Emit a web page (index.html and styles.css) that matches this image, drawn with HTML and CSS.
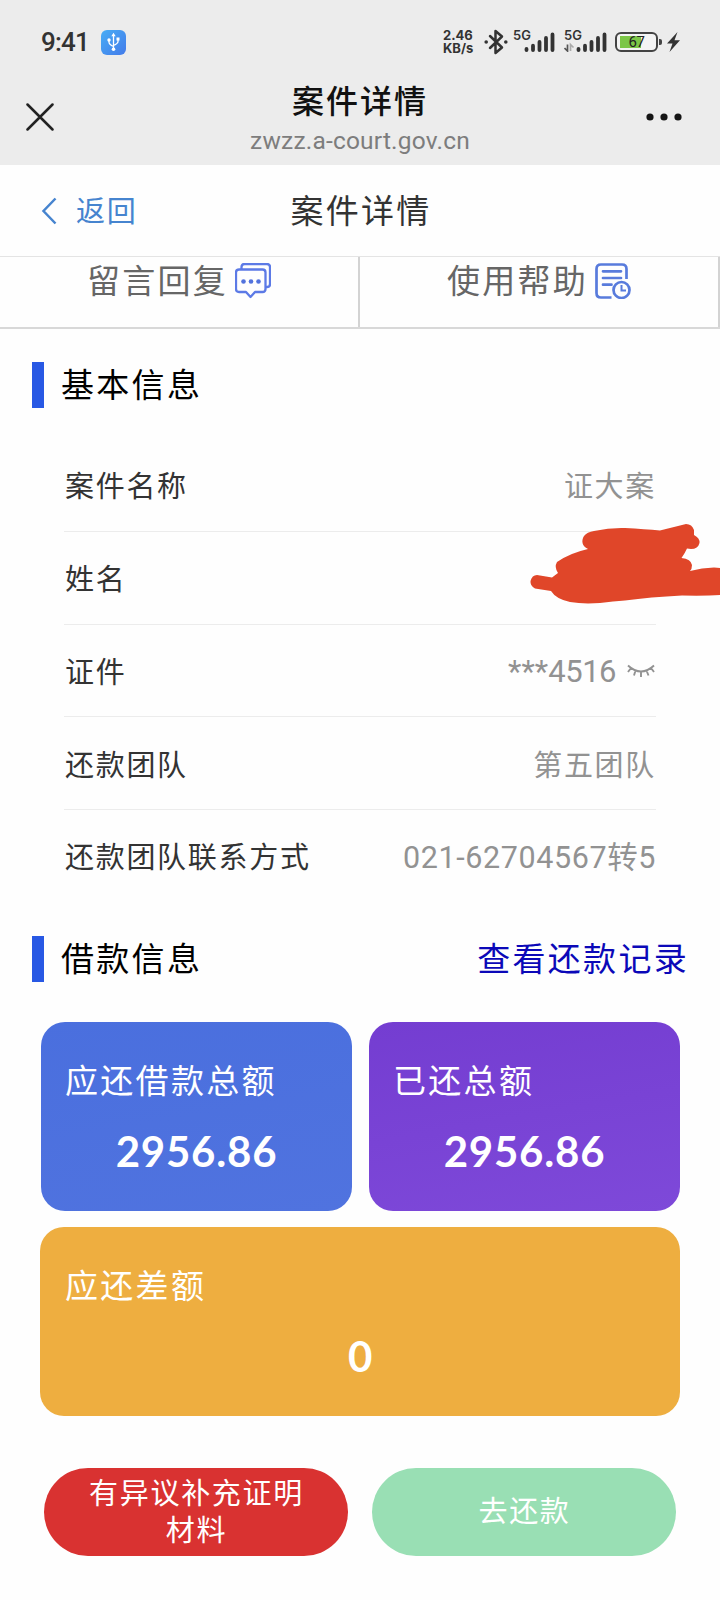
FILE: index.html
```html
<!DOCTYPE html>
<html lang="zh-CN">
<head>
<meta charset="utf-8">
<title>案件详情</title>
<link rel="stylesheet" href="styles.css">
</head>
<body>
<header class="app-bar">
  <div class="status">
    <span class="clock">9:41</span>
    <svg class="usb" width="25" height="25" viewBox="0 0 25 25">
      <defs><linearGradient id="usb" x1="0" y1="0" x2="1" y2="1"><stop offset="0" stop-color="#49adf5"/><stop offset="1" stop-color="#437bea"/></linearGradient></defs>
      <rect width="25" height="25" rx="6" fill="url(#usb)"/>
      <path d="M12.500 5v14M8 10.500v1.700q0 2 4.500 4.300M17 9.500v2q0 2-4.500 4" fill="none" stroke="#fff" stroke-width="1.300"/>
      <path d="M12.500 2.800l2.200 3.500h-4.400zM15.500 7.500h3v3h-3z" fill="#fff"/>
      <circle cx="8" cy="10" r="1.700" fill="#fff"/><circle cx="12.500" cy="19.300" r="1.800" fill="#fff"/>
    </svg>
    <div class="rate"><span>2.46</span><span>KB/s</span></div>
    <svg class="bluetooth" width="24" height="26" viewBox="0 0 24 26">
      <path d="M6 7l12 11.500-6.500 5.500v-22l6.500 5.500L6 19" fill="none" stroke="#333" stroke-width="2.500" stroke-linejoin="round" stroke-linecap="round"/>
      <circle cx="2.200" cy="13" r="1.800" fill="#333"/><circle cx="21.800" cy="13" r="1.800" fill="#333"/>
    </svg>
    <div class="signal signal-a"><span class="net">5G</span>
      <svg width="31" height="20" viewBox="0 0 31 20"><path d="M2.500 17v1M9 13.700v4.300M15.500 10v8M22 6v12M28.500 2.500v15.500" fill="none" stroke="#333" stroke-width="3.800" stroke-linecap="round"/></svg>
    </div>
    <div class="signal signal-b"><span class="net">5G</span>
      <svg width="43" height="20" viewBox="0 0 43 20"><path d="M14.500 17v1M21 13.700v4.300M27.500 10v8M34 6v12M40.500 2.500v15.500" fill="none" stroke="#333" stroke-width="3.800" stroke-linecap="round"/><path d="M3.500 12.500v6.500l-3-3" fill="none" stroke="#555" stroke-width="1.700"/><path d="M6.500 19v-6.500l3 3" fill="none" stroke="#aaa" stroke-width="1.700"/></svg>
    </div>
    <div class="battery"><span class="level">67</span></div>
    <svg class="bolt" width="14" height="20" viewBox="0 0 14 20"><path d="M10.500 0L0 11.500h5.500L2.500 20 13 8.300H7.500z" fill="#333"/></svg>
  </div>
  <div class="title-row">
    <svg class="close" width="28" height="28" viewBox="0 0 28 28"><path d="M1.500 1.500l25 25M26.500 1.500l-25 25" stroke="#222" stroke-width="2.500" stroke-linecap="round"/></svg>
    <div class="titles">
      <div class="page-title">案件详情</div>
      <div class="url">zwzz.a-court.gov.cn</div>
    </div>
    <svg class="more" width="36" height="8" viewBox="0 0 36 8"><g fill="#151515"><circle cx="4" cy="4" r="3.600"/><circle cx="18" cy="4" r="3.600"/><circle cx="32" cy="4" r="3.600"/></g></svg>
  </div>
</header>

<nav class="nav">
  <a class="back"><svg width="16" height="28" viewBox="0 0 16 28"><path d="M14.500 1.500L2.500 14l12 12.500" fill="none" stroke="#4684cf" stroke-width="2.500"/></svg><span>返回</span></a>
  <h1 class="nav-title">案件详情</h1>
</nav>

<div class="tabs">
  <div class="tab"><span>留言回复</span>
    <svg width="36" height="36" viewBox="0 0 36 36" fill="none" stroke="#5c7ae6" stroke-width="2.300" stroke-linejoin="round">
      <path d="M6.500 6V4q0-3 3-3H32q3 0 3 3v17q0 3-3 3h-1.500"/>
      <path d="M4 6.500h23.500q3 0 3 3V26q0 3-3 3H20l-4.500 5-4.500-5H4q-3 0-3-3V9.500q0-3 3-3z"/>
      <g fill="#5272dd" stroke="none"><circle cx="8.500" cy="18.500" r="2.300"/><circle cx="16" cy="18.500" r="2.300"/><circle cx="23.500" cy="18.500" r="2.300"/></g>
    </svg>
  </div>
  <div class="tab"><span>使用帮助</span>
    <svg width="36" height="36" viewBox="0 0 36 36" fill="none" stroke="#587bdc" stroke-width="2.700">
      <path d="M31.500 16V6q0-4.500-4.500-4.500H6Q1.500 1.500 1.500 6v24q0 4.500 4.500 4.500h10.500"/>
      <path d="M8 8.300h18M8 15h18M8 21.700h8.500" stroke-linecap="round"/>
      <circle cx="26.500" cy="27" r="8"/><path d="M26.500 22v5.500h4.500" stroke-width="2"/>
    </svg>
  </div>
</div>

<main class="content">
  <section class="basic">
    <div class="section-head"><h2>基本信息</h2></div>
    <dl class="rows">
      <div class="row"><dt>案件名称</dt><dd>证大案</dd></div>
      <div class="row"><dt>姓名</dt><dd></dd>
        <svg class="scribble" width="192" height="90" viewBox="528 520 192 90">
          <path fill="#e04629" d="M588 548C582 545 581 540 584 535Q587 531 594 530Q610 526.500 625 527Q645 528 660 529.500Q674 526 686 523Q692 523 694 529V534Q700 537 699.500 542Q698 548 691 548L687 547.500Q685 552 681.500 557Q691 558 692 564Q692 568 690 570Q702 566.500 714 566.500L720 567V594Q705 595 682 594.500Q650 596 625 599.500L613 600.500Q588 604 570 601Q556 598 551 590L535 587.500Q530 585 530.500 580Q532 574 537 574L552 576.500L558 572Q554 566 557 561Q570 552 588 548Z"/>
        </svg>
      </div>
      <div class="row"><dt>证件</dt><dd><span class="mask">***</span>4516<svg class="eye" width="28" height="14" viewBox="0 0 28 14"><path d="M1 1.500q13 12 26 0M4 4L1 8M8.500 6.500L7 11.500M14 7.500V13M19.500 6.500l2 5M24 4l3 4" fill="none" stroke="#929292" stroke-width="1.900"/></svg></dd></div>
      <div class="row"><dt>还款团队</dt><dd>第五团队</dd></div>
      <div class="row"><dt>还款团队联系方式</dt><dd class="phone">021-62704567转5</dd></div>
    </dl>
  </section>

  <section class="loan">
    <div class="section-head"><h2>借款信息</h2><a class="records">查看还款记录</a></div>
    <div class="cards">
      <div class="card due"><span class="label">应还借款总额</span><strong>2956.86</strong></div>
      <div class="card paid"><span class="label">已还总额</span><strong>2956.86</strong></div>
      <div class="card gap"><span class="label">应还差额</span><strong>0</strong></div>
    </div>
  </section>

  <div class="actions">
    <button class="btn dispute">有异议补充证明材料</button>
    <button class="btn repay">去还款</button>
  </div>
</main>
</body>
</html>
```

FILE: styles.css
```css
* { box-sizing: border-box; }
body {
  margin: 0;
  width: 720px;
  height: 1600px;
  overflow: hidden;
  background: #fefefe;
  color: #333;
  font-family: Roboto, "Noto Sans CJK SC", sans-serif;
}
svg { display: block; flex: none; }
h1, h2, dl, dt, dd { margin: 0; font-weight: 400; }

.app-bar { height: 165px; background: #ececec; }
.status { display: flex; align-items: center; height: 72px; padding: 12px 0 0 40px; }
.clock { width: 61px; padding-left: 1px; font-size: 26px; font-weight: 500; line-height: 30px; letter-spacing: -.8px; white-space: nowrap; }
.rate { display: flex; flex-direction: column; width: 35px; margin-left: 317px; font: 700 13px/13px Inter, sans-serif; white-space: nowrap; color: #333; }
.bluetooth { margin-left: 6px; }
.signal { position: relative; height: 22px; }
.signal-a { width: 42px; margin-left: 5px; padding: 1px 0 0 11px; }
.signal-b { width: 43px; margin-left: 9px; padding-top: 1px; }
.net { position: absolute; left: 0; top: -3px; font: 600 13px/14px Inter, sans-serif; }
.battery {
  position: relative;
  width: 43px;
  height: 20px;
  margin-left: 8px;
  border: 2px solid #444;
  border-radius: 6px;
  background: linear-gradient(#7cc647, #7cc647) 3px 2px / 21px 12px no-repeat #f4f4f4;
  text-align: center;
}
.battery::after { content: ""; position: absolute; right: -6px; top: 5px; width: 3px; height: 6px; border-radius: 0 2px 2px 0; background: #444; }
.level { display: block; font: 400 15px/17px Roboto, sans-serif; letter-spacing: -.5px; color: #222; }
.bolt { margin-left: 9px; }

.title-row { display: flex; align-items: center; height: 90px; padding: 0 38px 0 26px; }
.titles { flex: 1; padding: 5px 0 0 20px; text-align: center; }
.page-title { font-size: 32px; font-weight: 500; line-height: 40px; letter-spacing: 2px; color: #111; }
.url { padding-top: 2px; font-size: 24.500px; line-height: 34px; letter-spacing: .2px; color: #7d7d7d; }

.nav { display: grid; grid-template-columns: 1fr auto 1fr; align-items: center; height: 91px; padding: 0 39px 0 41px; }
.back { display: flex; align-items: center; gap: 19px; color: #4684cf; font-size: 29px; letter-spacing: 1.700px; }
.back span, .nav-title { padding-bottom: 4px; }
.nav-title { font-size: 33px; letter-spacing: 2.300px; }

.tabs { display: grid; grid-template-columns: 1fr 1fr; height: 73px; border-top: 1px solid #e4e4e4; border-bottom: 2px solid #d8d8d8; }
.tab { display: flex; justify-content: center; align-items: flex-start; gap: 7px; padding: 6px 0 0; border-right: 2px solid #d3d3d3; color: #666; font-size: 33px; line-height: 37px; letter-spacing: 2.300px; }

.section-head { display: flex; align-items: center; justify-content: space-between; height: 46px; margin: 0 32px; padding-left: 17px; border-left: 12px solid #2858e4; }
.section-head h2, .records { padding-top: 1px; font-size: 33px; line-height: 45px; letter-spacing: 2.300px; color: #000; }
.section-head .records { margin-right: -1px; color: #0b08b8; }
.basic { padding-top: 33px; }
.rows { margin: 31px 64px 33px; }
.row { position: relative; display: flex; align-items: center; justify-content: space-between; height: 92.800px; padding-bottom: 1px; border-bottom: 1px solid #ececec; font-size: 29px; letter-spacing: 1.700px; }
.row:last-child { padding-bottom: 4px; border-bottom: 0; }
.row dt { padding-left: 1px; }
.row dd { display: flex; align-items: center; color: #929292; }
.row:nth-child(3) dd { padding-top: 3px; font-size: 31px; letter-spacing: -.5px; }
.row .phone { font-size: 30.500px; letter-spacing: .6px; }
.mask { letter-spacing: .1px; }
.eye { margin-left: 11px; margin-right: 1px; }
.scribble { position: absolute; left: 464px; top: -11px; }

.cards { display: grid; grid-template-columns: 311px 311px; gap: 16px 17px; margin: 40px 40px 52px 41px; color: #fff; }
.card { display: flex; flex-direction: column; height: 189px; padding: 38px 24px 0; border-radius: 24px; }
.due { background: linear-gradient(170deg, #4a6fde, #5073df); }
.paid { background: linear-gradient(170deg, #743dd1, #7e49d9); }
.gap { grid-column: 1 / -1; margin-left: -1px; padding-left: 25px; background: #eeae40; }
.label { font-size: 33px; line-height: 44px; letter-spacing: 2.300px; }
.card strong { margin-top: 21px; font: 700 42px/52px Lato, sans-serif; letter-spacing: .8px; text-align: center; }

.actions { display: flex; gap: 24px; padding: 0 43px 0 44px; }
.btn { width: 304px; height: 88px; padding: 2px 41px 0 42px; border: 0; border-radius: 44px; color: #fff; font: 400 29px/37px Roboto, "Noto Sans CJK SC", sans-serif; letter-spacing: 1.700px; }
.dispute { background: #d93231; }
.repay { background: #99dfb4; }
```
